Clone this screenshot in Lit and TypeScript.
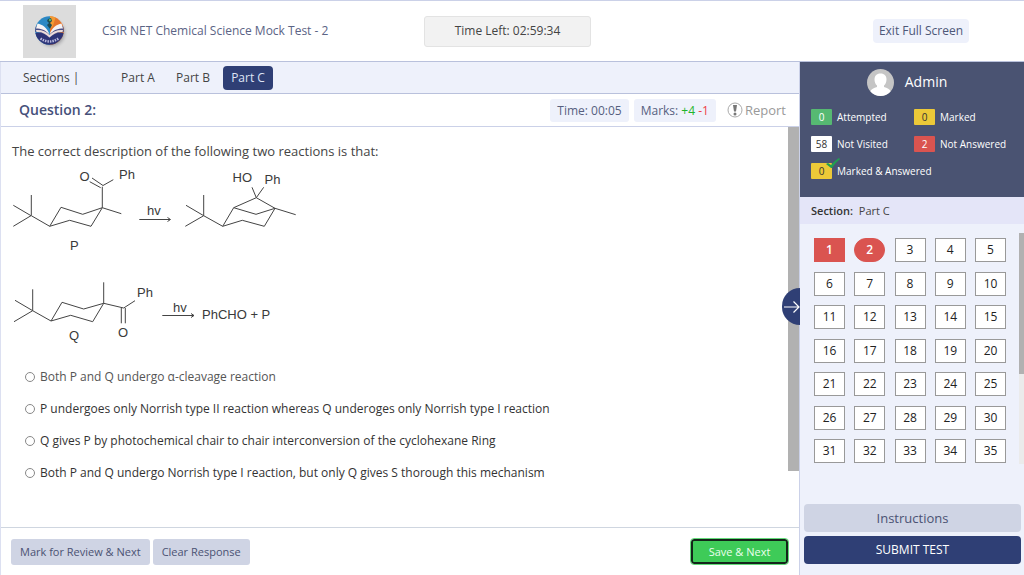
import { LitElement, html, css, svg } from "lit";
import { customElement, state } from "lit/decorators.js";
import { classMap } from "lit/directives/class-map.js";

const OPTIONS = [
  "Both P and Q undergo α-cleavage reaction",
  "P undergoes only Norrish type II reaction whereas Q underoges only Norrish type I reaction",
  "Q gives P by photochemical chair to chair interconversion of the cyclohexane Ring",
  "Both P and Q undergo Norrish type I reaction, but only Q gives S thorough this mechanism",
];

const SECTIONS = ["Part A", "Part B", "Part C"];

const QUESTIONS = Array.from({ length: 35 }, (_, i) => i + 1);

/* Logo: open book on a two-tone disc */
@customElement("site-logo")
class SiteLogo extends LitElement {
  static styles = css`
    :host { display: block; }
    svg { display: block; }
  `;
  render() {
    return html`<svg width="53" height="53" viewBox="0 0 53 53" role="img" aria-label="Site logo">
      <defs>
        <clipPath id="disc"><circle cx="26.5" cy="25.5" r="14.3" /></clipPath>
        <radialGradient id="shade"><stop offset=".6" stop-color="#8b8b90" /><stop offset="1" stop-color="#dcdcdc" stop-opacity="0" /></radialGradient>
      </defs>
      <rect width="53" height="53" fill="#dcdcdc" />
      <circle cx="28.5" cy="28" r="17" fill="url(#shade)" />
      <g clip-path="url(#disc)">
        <rect x="12" y="11" width="15" height="30" fill="#2b88c4" />
        <rect x="27" y="11" width="15" height="30" fill="#e6752a" />
        <path d="M27 11h6l-3 10-3 3z" fill="#f29b33" />
        <path d="M12 28c5-1 11 0 14.500 3 3.500-3 10-4 15-3v14H12z" fill="#2d3477" />
        <path d="M12.500 21c5 .5 11 3 14 9 3-6 9-8.500 14-9l1 6c-6 0-11 2-15 6-4-4-9-6-15-6z" fill="#4a4f86" />
      </g>
      <path d="M14.500 18.500c5 1 9.500 4 12 11-4-4.500-8.500-6-13.500-6zM38.500 18.500c-5 1-9.500 4-12 11 4-4.500 8.500-6 13.500-6z" fill="#f6f3f4" />
      <path d="M13 25c5-.5 10 1 13.500 5C30 26 35 24.500 40 25l-.5 2c-5-.5-9 1.500-13 5.500-4-4-8-6-13-5.500z" fill="#ecdcda" />
      <path d="M25 14l3-1 1 3-2 2 2 2-2 4-3-4 2-2-2-2z" fill="#1d4a52" />
      <circle cx="27" cy="15" r="1.200" fill="#58b06a" />
      <path d="M17.500 33.500q9 6 18 0" fill="none" stroke="#b9b8dc" stroke-width="2.500" stroke-dasharray="1.500 1" />
    </svg>`;
  }
}

/* Reaction scheme: photolysis of P (upper line) and Q (lower line) */
@customElement("reaction-scheme")
class ReactionScheme extends LitElement {
  static styles = css`
    :host { display: block; }
    svg { display: block; }
    .bonds { fill: none; stroke: #444; stroke-width: 1; stroke-linejoin: round; }
    text { font: 13px "Liberation Sans", sans-serif; fill: #3a3a3a; }
  `;
  render() {
    return html`<svg width="300" height="190" viewBox="12 160 300 190" role="img" aria-label="Reactions of P and Q with light">
      ${svg`
      <path class="bonds" d="M13.300 205.300L31 215.700L13.300 226.300M31.300 195V215.700L49.700 226.300L61 207.300L82.700 214.300L102.300 207.700L91 226.300L69.700 220.300L49.700 226.300M121.300 213.700L102.300 207.700V186.700M89.700 181.700L100.700 187.700M92 178L103 185.500L113.300 179.700"/>
      <path class="bonds" d="M139.300 219.500H170M167.500 217.500L170.500 219.500L167.500 221.500"/>
      <path class="bonds" d="M186 205.300L203.700 215.700L185.300 226.300M203.700 195V215.700L222.700 226.300L233.700 207.700L256 214.300L275 208.300L264.300 226.300L242.300 220.300L222.700 226.300M233.700 207.700L256.300 197.700L275 208.300L295.700 214.700M252 187.300L256.300 197.700L263.700 187.300"/>
      <path class="bonds" d="M15 300.300L32.700 310.700L14 321.700M32.700 289.300V310.700L51 321L62 302.300L83.700 309L103.700 303.300L92.700 321.700L70.700 315.300L51 321M103.700 282.300V303.300L123.700 308L135 300.700M121.300 308V323.300M125.300 308V323.300"/>
      <path class="bonds" d="M162.300 315.500H194M191 313.500L194 315.500L191 317.500"/>
      <text x="79.500" y="181">O</text><text x="119" y="179">Ph</text><text x="147" y="215">hv</text><text x="70" y="250">P</text>
      <text x="232.500" y="182">HO</text><text x="264.500" y="184">Ph</text>
      <text x="137" y="297">Ph</text><text x="118" y="337">O</text><text x="69" y="340">Q</text><text x="173" y="312">hv</text><text x="202" y="319">PhCHO + P</text>`}
    </svg>`;
  }
}

@customElement("app-root")
class AppRoot extends LitElement {
  @state() private section = "Part C";
  @state() private choice = -1;

  static styles = css`
    :host {
      display: grid;
      grid-template-rows: auto 1fr;
      height: 100vh;
      box-sizing: border-box;
      border-top: 1px solid #cbd1e8;
      background: #fff;
      color: #444;
      font-family: "Open Sans", sans-serif;
      font-size: 12px;
      line-height: 18px;
    }
    * { box-sizing: border-box; }
    button { font: inherit; color: inherit; border: 0; margin: 0; padding: 0; cursor: pointer; }
    h1, h2, p, fieldset { margin: 0; padding: 0; border: 0; font-weight: 400; }

    .header { display: grid; grid-template-columns: 400px 1fr 224px; align-items: center; height: 61px; border-bottom: 1px solid #b9c1dc; }
    .brand { display: flex; align-items: center; gap: 26px; padding-left: 23px; color: #5b6485; }
    .title { font-size: 12px; }
    .clock { justify-self: start; margin-left: 24px; width: 167px; padding-bottom: 2px; line-height: 27px; border: 1px solid #e3e3e3; border-radius: 3px; background: #f2f2f2; text-align: center; color: #444; }
    .exit { justify-self: center; margin-left: 18px; width: 96px; line-height: 24px; border-radius: 4px; background: #eef1fb; color: #4d5778; }

    .body { display: grid; grid-template-columns: 1fr 224px; min-height: 0; }
    .exam { position: relative; display: flex; flex-direction: column; min-width: 0; min-height: 0; border-left: 1px solid #dce0f1; border-right: 1px solid #cbd1e8; }
    .tabs { display: flex; align-items: center; gap: 5px; height: 32px; padding-left: 22px; background: #eef1fb; border-bottom: 1px solid #b9c1dc; }
    .tabs-label { width: 85px; }
    .tab { height: 24px; width: 50px; border-radius: 4px; background: none; font-size: 12px; }
    .tab.active { background: #2f3f75; color: #dfe4f5; }
    .qbar { display: flex; align-items: center; gap: 5px; height: 33px; padding: 0 13px 0 18px; border-bottom: 1px solid #cbd1e8; }
    .qnum { flex: 1; font-size: 14px; font-weight: 600; color: #46507a; }
    .chip { line-height: 23px; padding: 0 7px; border-radius: 3px; background: #eef1fb; color: #56607f; }
    .plus { color: #1fb52c; }
    .minus { color: #ee3f48; }
    .report { display: flex; align-items: center; gap: 2px; margin-left: 6px; background: none; color: #999; font-size: 13px; }

    .scroll { display: grid; grid-template-columns: 1fr 11px; flex: 1; min-height: 0; }
    .thumb { height: 86%; background: #b1b1b1; }
    .content { padding: 15px 0 0 11px; }
    .prompt { font-size: 13px; }
    .choices { display: grid; padding: 11px 0 0 13px; color: #333; }
    .choice { display: flex; align-items: center; gap: 5px; height: 32px; }
    .choice:first-of-type { color: #555; }
    .choice input { appearance: none; width: 10px; height: 10px; margin: 0; border: 1px solid #888; border-radius: 50%; background: #fff; }
    .choice input:checked { background: #2f3f75; }
    .footer { display: flex; align-items: center; gap: 3px; height: 48px; padding: 0 11px 0 10px; border-top: 1px solid #cfd6e0; }
    .soft { height: 26px; padding: 0 9px; border-radius: 3px; background: #cfd4e4; color: #4b5273; font-size: 11px; }
    .save { height: 25px; width: 97px; margin-left: auto; border: 2px solid #14251a; outline: 1px solid #63da79; border-radius: 3px; background: #3ecb58; color: #eaffee; font-size: 11px; font-weight: 500; }
    .toggle { position: absolute; right: -1px; top: 226px; width: 18px; height: 37px; border-radius: 18px 0 0 18px; background: #2f3f75; }
    .toggle svg { display: block; margin-left: 2px; }

    .side { display: flex; flex-direction: column; min-height: 0; background: #eef1fb; }
    .panel { height: 135px; padding: 6px 11px 0; background: #4a5372; color: #fff; }
    .user { display: flex; justify-content: center; align-items: center; gap: 11px; height: 28px; font-size: 14px; margin-right: 10px; }
    .legend { display: grid; grid-template-columns: 103px 1fr; grid-auto-rows: 16px; row-gap: 11px; margin-top: 13px; font-size: 10px; font-weight: 500; }
    .key { display: flex; align-items: center; gap: 5px; line-height: 16px; white-space: nowrap; }
    .key.span { grid-column: 1 / -1; }
    .count { position: relative; flex: none; width: 21px; height: 16px; border-radius: 1px; text-align: center; font-weight: 400; }
    .green { background: #56b972; }
    .yellow { background: #ecc938; color: #333; }
    .white { background: #fff; color: #333; }
    .red { background: #da5450; }
    .tick { position: absolute; right: -8px; top: -5px; }
    .section { line-height: 27px; padding-left: 11px; background: #e4e5f8; font-size: 11px; }
    .section b { font-weight: 600; color: #333; margin-right: 3px; }
    .palette { display: grid; grid-template-columns: 1fr 5px; height: 240px; padding-top: 9px; }
    .numbers { display: grid; grid-template-columns: repeat(5, 31px); grid-auto-rows: 24px; justify-content: space-between; align-content: space-between; padding: 5px 13px 1px 14px; }
    .num { border: 1px solid #999; background: #fff; color: #222; }
    .num.visited { border-color: #da5450; background: #da5450; color: #fff; font-weight: 600; }
    .num.current { border-radius: 12px; }
    .rail { background: #ebebeb; }
    .rail-thumb { height: 61%; background: #b1b1b1; }
    .actions { display: grid; gap: 4px; margin-top: auto; padding: 0 3px 11px 4px; }
    .wide { height: 28px; border-radius: 4px; background: #cfd4e4; color: #4b5273; font-size: 13px; }
    .wide.submit { background: #2f3f75; color: #fff; font-size: 12px; font-weight: 500; }
  `;

  private key(count: number, label: string, tone: string, tick = false) {
    return html`<div class=${classMap({ key: true, span: tick })}><span class="count ${tone}">${count}${tick
      ? html`<svg class="tick" width="14" height="11" viewBox="0 0 14 11" aria-hidden="true"><path d="M0 6l2-1 3 2q3-4 8-7l1 1q-5 4-8 9H5z" fill="#20a050" /></svg>`
      : null}</span>${label}</div>`;
  }

  render() {
    return html`
      <header class="header">
        <div class="brand"><site-logo></site-logo><h1 class="title">CSIR NET Chemical Science Mock Test - 2</h1></div>
        <div class="clock">Time Left: 02:59:34</div>
        <button class="exit">Exit Full Screen</button>
      </header>
      <div class="body">
        <main class="exam">
          <nav class="tabs" aria-label="Sections">
            <span class="tabs-label">Sections |</span>
            ${SECTIONS.map((s) => html`<button class=${classMap({ tab: true, active: s === this.section })} @click=${() => (this.section = s)}>${s}</button>`)}
          </nav>
          <div class="qbar">
            <h2 class="qnum">Question 2:</h2>
            <span class="chip">Time: 00:05</span>
            <span class="chip">Marks: <span class="plus">+4</span> <span class="minus">-1</span></span>
            <button class="report">
              <svg width="16" height="16" viewBox="0 0 16 16" aria-hidden="true"><circle cx="8" cy="8" r="7" fill="#fff" stroke="#aaa" /><path d="M6 3h4L9 9.500H7z" fill="#777" /><circle cx="8" cy="12" r="1.500" fill="#777" /></svg>Report
            </button>
          </div>
          <div class="scroll">
            <div class="content">
              <p class="prompt">The correct description of the following two reactions is that:</p>
              <reaction-scheme></reaction-scheme>
              <fieldset class="choices" aria-label="Answer choices">
                ${OPTIONS.map((o, i) => html`<label class="choice"><input type="radio" name="answer" .checked=${this.choice === i} @change=${() => (this.choice = i)} /><span>${o}</span></label>`)}
              </fieldset>
            </div>
            <div class="thumb"></div>
          </div>
          <footer class="footer">
            <button class="soft">Mark for Review &amp; Next</button>
            <button class="soft" @click=${() => (this.choice = -1)}>Clear Response</button>
            <button class="save">Save &amp; Next</button>
          </footer>
          <button class="toggle" aria-label="Collapse panel">
            <svg width="16" height="14" viewBox="0 0 16 14" fill="none" stroke="#fff" stroke-width="1.200" aria-hidden="true"><path d="M0 7h15M9.500 1.500L15 7l-5.500 5.500" /></svg>
          </button>
        </main>
        <aside class="side">
          <div class="panel">
            <div class="user">
              <svg width="27" height="27" viewBox="0 0 27 27" aria-hidden="true"><defs><clipPath id="av"><circle cx="13.500" cy="13.500" r="13.500" /></clipPath></defs><g clip-path="url(#av)"><rect width="27" height="27" fill="#c5c5c5" /><path d="M13.500 4.500c4 0 6 2.500 6 6 0 2.500-1 5-2.500 6v1.500c3 1 6 2 7 5v5H3v-5c1-3 4-4 7-5v-1.500c-1.500-1-2.500-3.500-2.500-6 0-3.500 2-6 6-6z" fill="#fff" /></g></svg>
              <span>Admin</span>
            </div>
            <div class="legend">
              ${this.key(0, "Attempted", "green")}${this.key(0, "Marked", "yellow")}
              ${this.key(58, "Not Visited", "white")}${this.key(2, "Not Answered", "red")}
              ${this.key(0, "Marked & Answered", "yellow", true)}
            </div>
          </div>
          <div class="section"><b>Section:</b> ${this.section}</div>
          <div class="palette">
            <div class="numbers">
              ${QUESTIONS.map((n) => html`<button class=${classMap({ num: true, visited: n < 3, current: n === 2 })}>${n}</button>`)}
            </div>
            <div class="rail"><div class="rail-thumb"></div></div>
          </div>
          <div class="actions">
            <button class="wide">Instructions</button>
            <button class="wide submit">SUBMIT TEST</button>
          </div>
        </aside>
      </div>
    `;
  }
}
